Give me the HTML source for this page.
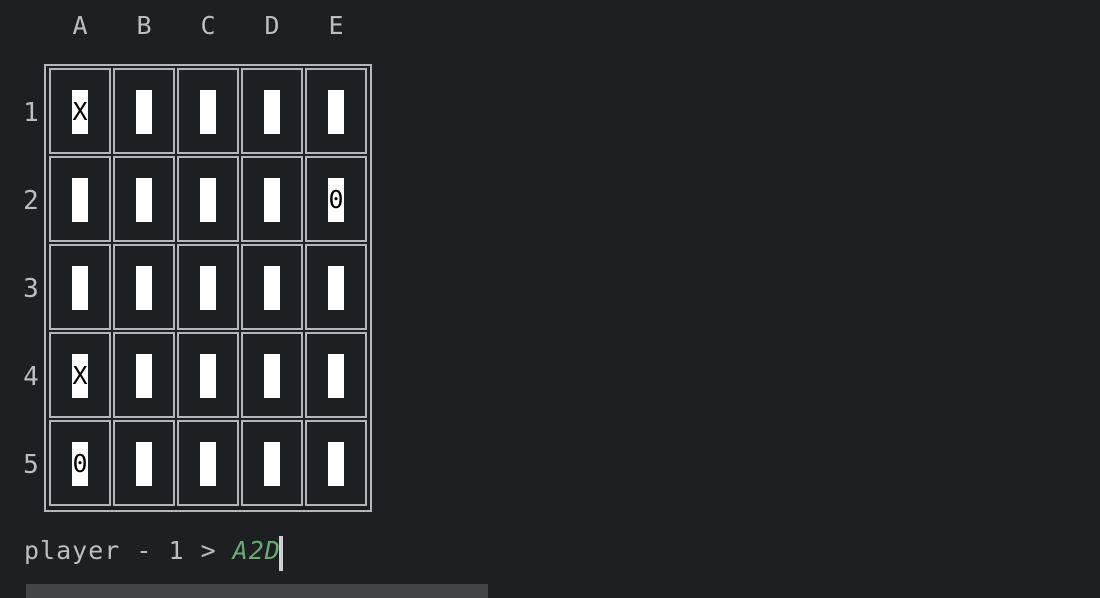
<!DOCTYPE html>
<html><head><meta charset="utf-8"><style>
body{margin:0;width:1100px;height:598px;background:#1e1f22;position:relative;overflow:hidden;font-family:"DejaVu Sans Mono","Liberation Mono",monospace;color:#bcbec4}
.a{position:absolute}
.h{font-size:25px;top:11px;width:20px;text-align:center}
.r{font-size:26px;left:21px;width:20px;text-align:center}
.cell{position:absolute;border:2px solid #b4b5bc;box-sizing:border-box;width:62px;height:86px}
.blk{position:absolute;background:#fff;width:16px;height:44px;color:#000;font-size:25px;text-align:center;line-height:44px;overflow:hidden}
</style></head><body>
<div class="a h" style="left:70px">A</div>
<div class="a h" style="left:134px">B</div>
<div class="a h" style="left:198px">C</div>
<div class="a h" style="left:262px">D</div>
<div class="a h" style="left:326px">E</div>
<div class="a" style="left:44px;top:64px;width:328px;height:448px;border:2px solid #b4b5bc;box-sizing:border-box"></div>
<div id="g"></div>
<div class="a r" style="top:98px">1</div>
<div class="a r" style="top:186px">2</div>
<div class="a r" style="top:274px">3</div>
<div class="a r" style="top:362px">4</div>
<div class="a r" style="top:450px">5</div>
<script>
var g=document.getElementById('g'),h='';
var t={'0,0':'X','1,4':'0','3,0':'X','4,0':'0'};
for(var j=0;j<5;j++)for(var i=0;i<5;i++){
h+='<div class="cell" style="left:'+(49+64*i)+'px;top:'+(68+88*j)+'px"></div>';
h+='<div class="blk" style="left:'+(72+64*i)+'px;top:'+(90+88*j)+'px">'+(t[j+','+i]||'')+'</div>';}
g.innerHTML=h;
</script>
<div class="a" style="left:24px;top:536px;font-size:25px;letter-spacing:1px;white-space:pre">player - 1 &gt; <span style="color:#6aab73;font-style:italic">A2D</span></div>
<div class="a" style="left:279px;top:536px;width:4px;height:35px;background:#ced0d6"></div>
<div class="a" style="left:26px;top:584px;width:462px;height:14px;background:#434447"></div>
</body></html>
